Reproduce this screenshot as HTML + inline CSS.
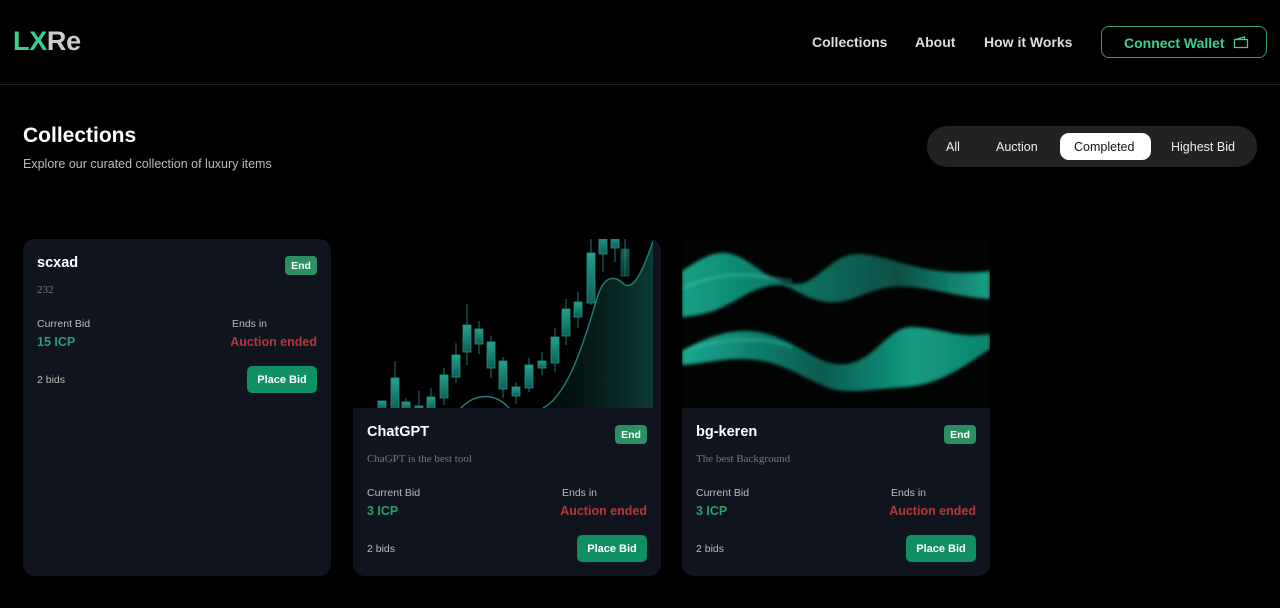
<!DOCTYPE html>
<html><head><meta charset="utf-8"><style>
*{margin:0;padding:0;box-sizing:border-box}
body{width:1280px;height:608px;background:#000;font-family:"Liberation Sans",sans-serif;color:#fff;position:relative;overflow:hidden}
.abs{position:absolute}
.nav{position:absolute;top:0;left:0;width:1280px;height:85px;border-bottom:1px solid #1e1e1e}
.logo{left:13px;top:26px;font-size:27px;font-weight:bold;letter-spacing:-0.3px}
.link{top:34px;font-size:14px;font-weight:bold;color:#ddd}
.btn{left:1101px;top:26px;width:166px;height:32px;border:1px solid #2f9e6e;border-radius:8px;color:#3ecf8e;font-size:14px;font-weight:bold;padding:8px 0 0 22px}
.filter{left:927px;top:126px;width:330px;height:41px;background:#222;border-radius:20px}
.f{top:140px;font-size:12.5px;color:#eee}
.card{position:absolute;background:#0f141f;border-radius:12px;width:308px;overflow:hidden}
.title{position:absolute;left:14px;font-size:14.5px;font-weight:bold;top:16px}
.badge{position:absolute;right:14px;width:32px;height:19px;background:#2b8f62;border-radius:4px;font-size:10.5px;font-weight:bold;display:flex;align-items:center;justify-content:center}
.desc{position:absolute;left:14px;font-family:"Liberation Serif",serif;font-size:11px;color:#777}
.lbl{position:absolute;font-size:10.5px;color:#bbb}
.grn{position:absolute;left:14px;font-size:12.5px;font-weight:bold;color:#2e9e6e}
.red{position:absolute;right:14px;font-size:12.5px;font-weight:bold;color:#b3383d}
.pb{position:absolute;right:14px;width:70px;height:27px;background:#0f8f62;border-radius:5px;font-size:11px;font-weight:bold;display:flex;align-items:center;justify-content:center}
</style></head><body>
<div class="nav"></div>
<div class="abs logo"><span style="color:#3ecf8e">LX</span><span style="color:#ccc">Re</span></div>
<div class="abs link" style="left:812px">Collections</div>
<div class="abs link" style="left:915px">About</div>
<div class="abs link" style="left:984px">How it Works</div>
<div class="abs btn">Connect Wallet <svg width="16" height="13" viewBox="0 0 16 13" style="vertical-align:-1px;margin-left:4px"><path d="M1.5 3.5h13v8h-13z M2.5 3.5l9-2.5v2.5" fill="none" stroke="#3ecf8e" stroke-width="1.3"/></svg></div>
<div class="abs" style="left:23px;top:124px;font-size:21px;font-weight:bold">Collections</div>
<div class="abs" style="left:23px;top:157px;font-size:12.5px;color:#bbb">Explore our curated collection of luxury items</div>
<div class="abs filter"></div>
<div class="abs" style="left:1060px;top:133px;width:91px;height:27px;background:#fff;border-radius:9px"></div>
<div class="abs f" style="left:946px">All</div>
<div class="abs f" style="left:996px">Auction</div>
<div class="abs f" style="left:1074px;color:#111">Completed</div>
<div class="abs f" style="left:1171px">Highest Bid</div>

<div class="card" style="left:23px;top:239px;height:337px">
<div class="title">scxad</div><div class="badge" style="top:17px">End</div>
<div class="desc" style="top:45px">232</div>
<div class="lbl" style="left:14px;top:79px">Current Bid</div><div class="lbl" style="left:209px;top:79px">Ends in</div>
<div class="grn" style="top:96px">15 ICP</div><div class="red" style="top:96px">Auction ended</div>
<div class="lbl" style="left:14px;top:135px">2 bids</div><div class="pb" style="top:127px">Place Bid</div>
</div>

<div class="card" style="left:353px;top:239px;height:337px">
<svg class="abs" style="left:0;top:0" width="300" height="169" viewBox="0 4 300 169">
<defs><linearGradient id="cf" x1="0" y1="0" x2="1" y2="0"><stop offset="0" stop-color="#0a2a28" stop-opacity=".2"/><stop offset="1" stop-color="#0c3a36"/></linearGradient>
<linearGradient id="cd" x1="0" y1="0" x2="0" y2="1"><stop offset="0" stop-color="#25a090"/><stop offset="1" stop-color="#0f5e56"/></linearGradient></defs>
<rect x="0" y="0" width="300" height="175" fill="#000"/>
<path d="M190 173 C215 160 230 110 245 60 C252 40 262 40 272 50 C282 55 292 30 300 6 L300 173Z" fill="url(#cf)"/>
<path d="M190 173 C215 160 230 110 245 60 C252 40 262 40 272 50 C282 55 292 30 300 6" fill="none" stroke="#1a7f75" stroke-width="1.5"/>
<path d="M107 174 C120 160 140 155 157 174" fill="none" stroke="#1a7f75" stroke-width="1.5"/>
<g fill="url(#cd)" stroke="#1f9283" stroke-width="0.8">
<rect x="25" y="166" width="8" height="8"/>
<line x1="42" y1="126" x2="42" y2="174"/><rect x="38" y="143" width="8" height="31"/>
<line x1="53" y1="163" x2="53" y2="174"/><rect x="49" y="167" width="8" height="7"/>
<line x1="66" y1="156" x2="66" y2="174"/><rect x="62" y="171" width="8" height="3"/>
<line x1="78" y1="153" x2="78" y2="174"/><rect x="74" y="162" width="8" height="12"/>
<line x1="91" y1="133" x2="91" y2="170"/><rect x="87" y="140" width="8" height="23"/>
<line x1="103" y1="108" x2="103" y2="148"/><rect x="99" y="120" width="8" height="22"/>
<line x1="114" y1="69" x2="114" y2="130"/><rect x="110" y="90" width="8" height="27"/>
<line x1="126" y1="86" x2="126" y2="119"/><rect x="122" y="94" width="8" height="15"/>
<line x1="138" y1="101" x2="138" y2="143"/><rect x="134" y="107" width="8" height="26"/>
<line x1="150" y1="122" x2="150" y2="163"/><rect x="146" y="126" width="8" height="28"/>
<line x1="163" y1="147" x2="163" y2="169"/><rect x="159" y="152" width="8" height="9"/>
<line x1="176" y1="123" x2="176" y2="157"/><rect x="172" y="130" width="8" height="23"/>
<line x1="189" y1="117" x2="189" y2="140"/><rect x="185" y="126" width="8" height="7"/>
<line x1="202" y1="93" x2="202" y2="137"/><rect x="198" y="102" width="8" height="26"/>
<line x1="213" y1="64" x2="213" y2="110"/><rect x="209" y="74" width="8" height="27"/>
<line x1="225" y1="57" x2="225" y2="93"/><rect x="221" y="67" width="8" height="15"/>
<line x1="238" y1="3" x2="238" y2="70"/><rect x="234" y="18" width="8" height="50"/>
<line x1="250" y1="0" x2="250" y2="37"/><rect x="246" y="0" width="8" height="19"/>
<line x1="262" y1="0" x2="262" y2="27"/><rect x="258" y="0" width="8" height="13"/>
<line x1="272" y1="0" x2="272" y2="41"/><rect x="268" y="14" width="8" height="27" opacity=".6"/>
</g></svg>
<div class="title" style="top:185px">ChatGPT</div><div class="badge" style="top:186px">End</div>
<div class="desc" style="top:214px">ChaGPT is the best tool</div>
<div class="lbl" style="left:14px;top:248px">Current Bid</div><div class="lbl" style="left:209px;top:248px">Ends in</div>
<div class="grn" style="top:265px">3 ICP</div><div class="red" style="top:265px">Auction ended</div>
<div class="lbl" style="left:14px;top:304px">2 bids</div><div class="pb" style="top:296px">Place Bid</div>
</div>

<div class="card" style="left:682px;top:239px;height:337px">
<svg class="abs" style="left:0;top:0" width="308" height="169" viewBox="0 0 308 169">
<defs><linearGradient id="w1" x1="0" y1="0" x2="1" y2="0"><stop offset="0" stop-color="#14a086"/><stop offset=".4" stop-color="#0c7060"/><stop offset=".7" stop-color="#0b4f45"/><stop offset="1" stop-color="#17a088"/></linearGradient>
<linearGradient id="w2" x1="0" y1="0" x2="1" y2="0"><stop offset="0" stop-color="#17a88e"/><stop offset=".45" stop-color="#0a5a50"/><stop offset=".75" stop-color="#139a83"/><stop offset="1" stop-color="#108470"/></linearGradient>
<filter id="bl"><feGaussianBlur stdDeviation="1.5"/></filter></defs>
<rect width="308" height="169" fill="#010403"/>
<g filter="url(#bl)">
<path d="M0 32 C15 22 30 12 45 14 C70 18 85 45 115 45 C135 45 150 15 175 15 C210 15 240 40 308 32 L308 60 C270 58 240 45 210 48 C180 52 170 65 145 63 C120 60 110 45 95 46 C60 48 50 75 0 78Z" fill="url(#w1)"/>
<path d="M0 112 C30 95 60 85 95 98 C125 110 140 128 165 125 C195 120 205 88 230 88 C255 88 275 100 308 95 L308 110 C285 125 260 145 225 148 C190 150 170 155 150 150 C120 140 100 120 60 120 C35 120 15 126 0 126Z" fill="url(#w2)"/>
<path d="M0 50 C40 30 70 35 110 42" fill="none" stroke="#3fd6b8" stroke-width="2" opacity=".5"/>
<path d="M0 112 C40 100 80 96 110 108" fill="none" stroke="#3fd6b8" stroke-width="2" opacity=".45"/>
</g></svg>
<div class="title" style="top:185px">bg-keren</div><div class="badge" style="top:186px">End</div>
<div class="desc" style="top:214px">The best Background</div>
<div class="lbl" style="left:14px;top:248px">Current Bid</div><div class="lbl" style="left:209px;top:248px">Ends in</div>
<div class="grn" style="top:265px">3 ICP</div><div class="red" style="top:265px">Auction ended</div>
<div class="lbl" style="left:14px;top:304px">2 bids</div><div class="pb" style="top:296px">Place Bid</div>
</div>
</body></html>
